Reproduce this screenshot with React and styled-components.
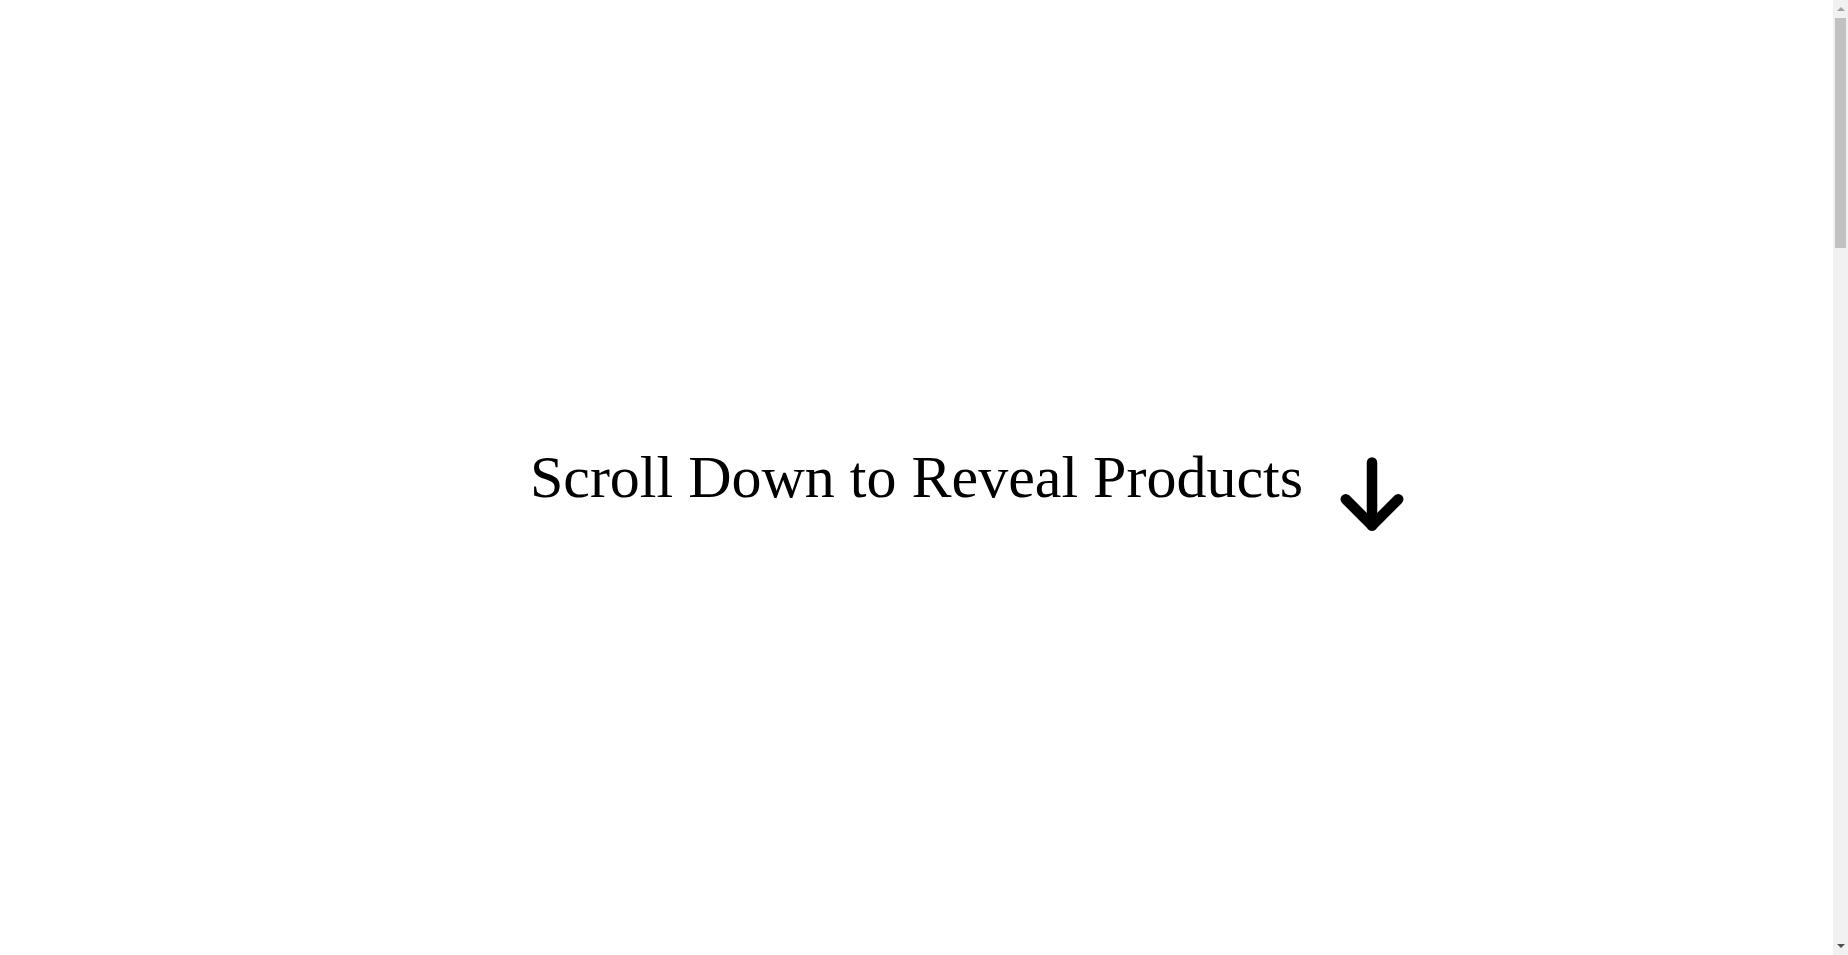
import styled, { createGlobalStyle } from "styled-components";

const GlobalStyle = createGlobalStyle`
  html, body {
    margin: 0;
    padding: 0;
    background-color: #fff;
  }
  body {
    font-family: "Liberation Serif", "Times New Roman", serif;
    color: #000;
  }
`;

const Page = styled.main`
  margin-right: 15px;
`;

const Hero = styled.section`
  height: 100vh;
  display: flex;
  align-items: center;
`;

const HeroRow = styled.div`
  width: 100%;
  display: grid;
  grid-template-columns: 1fr auto 1fr;
  align-items: center;
`;

const Heading = styled.h1`
  grid-column: 2;
  margin: 0;
  font-size: 60px;
  font-weight: 400;
  white-space: nowrap;
`;

const ArrowIcon = styled.svg`
  grid-column: 3;
  justify-self: start;
  width: 84px;
  height: 84px;
  margin-left: 27px;
  margin-top: 32px;
  color: #000;
`;

const Products = styled.section`
  height: 300vh;
`;

/* classic scrollbar as it shows in the screenshot */
const ScrollRail = styled.div`
  position: fixed;
  top: 0;
  right: 0;
  bottom: 0;
  width: 15px;
  background-color: #f1f1f1;
  display: flex;
  flex-direction: column;
`;

const ScrollButton = styled.div`
  height: 17px;
  flex-shrink: 0;
  display: flex;
  justify-content: center;
  align-items: ${(p) => (p.$down ? "flex-start" : "flex-end")};
  padding: ${(p) => (p.$down ? "6px 0 0" : "0 0 6px")};
  box-sizing: border-box;

  &::before {
    content: "";
    width: 0;
    height: 0;
    border-left: 4px solid transparent;
    border-right: 4px solid transparent;
    ${(p) =>
      p.$down
        ? "border-top: 4px solid #505050;"
        : "border-bottom: 4px solid #a3a3a3;"}
  }
`;

const ScrollTrack = styled.div`
  flex: 1;
  padding: 1px 2px 0;
`;

const ScrollThumb = styled.div`
  height: 230px;
  background-color: #c1c1c1;
`;

const ArrowDown = () => (
  <ArrowIcon
    viewBox="0 0 24 24"
    fill="none"
    stroke="currentColor"
    strokeWidth="3"
    strokeLinecap="round"
    strokeLinejoin="round"
  >
    <path d="M12 3v18" />
    <path d="M19.5 13.5 12 21l-7.5-7.5" />
  </ArrowIcon>
);

const App = () => {
  return (
    <>
      <GlobalStyle />
      <Page>
        <Hero>
          <HeroRow>
            <Heading>Scroll Down to Reveal Products</Heading>
            <ArrowDown />
          </HeroRow>
        </Hero>
        <Products />
      </Page>
      <ScrollRail>
        <ScrollButton />
        <ScrollTrack>
          <ScrollThumb />
        </ScrollTrack>
        <ScrollButton $down />
      </ScrollRail>
    </>
  );
};

export default App;
